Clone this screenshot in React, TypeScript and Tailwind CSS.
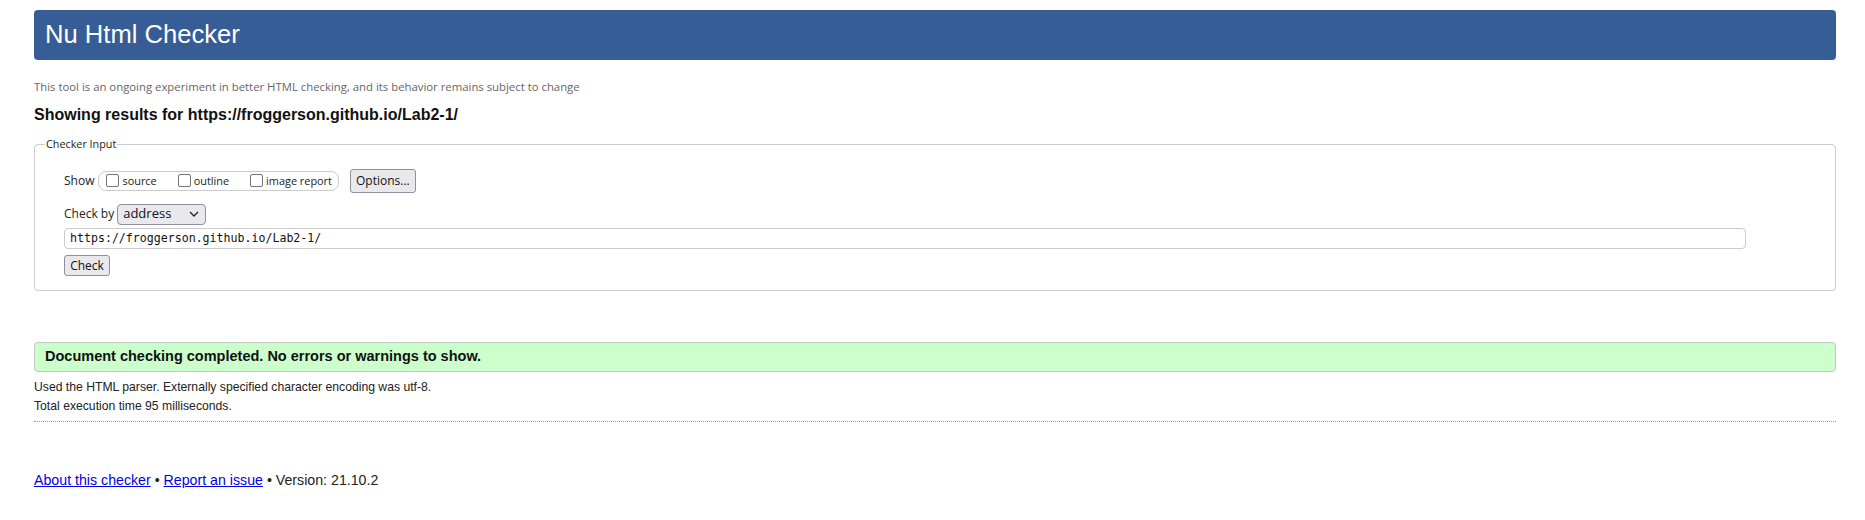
import React from "react";

function Box({ label }: { label: string }) {
  return (
    <span className="flex items-center">
      <span className="inline-block w-[13px] h-[13px] border border-[#767676] rounded-[2px] bg-white" />
      <span className="ml-[3px] text-[10.9px] text-[#222]">{label}</span>
    </span>
  );
}

export default function App() {
  return (
    <div className="bg-white min-h-[520px] pl-[34px] pr-[29px] pt-[10px] font-['Liberation_Sans',Arial,sans-serif] text-[#111]">
      <div className="h-[50px] rounded-[4px] bg-[#365d95] flex items-center pl-[11px]">
        <h1 className="text-white text-[25.6px] leading-none">Nu Html Checker</h1>
      </div>
      <p className="mt-[20px] h-[14px] leading-[14px] text-[11.35px] text-[#666666] font-['Open_Sans',sans-serif]">
        This tool is an ongoing experiment in better HTML checking, and its behavior remains subject to change
      </p>
      <h2 className="mt-[11px] h-[20px] leading-[20px] text-[16px] font-bold text-[#111]">
        Showing results for https://froggerson.github.io/Lab2-1/
      </h2>
      <fieldset className="mt-[11px] border border-[#cccccc] rounded-[4px] pl-[29px] pb-[14px] font-['Open_Sans',sans-serif] text-[#222]">
        <legend className="-ml-[19px] px-[1px] h-[16px] leading-[16px] text-[10.8px]">Checker Input</legend>
        <div className="pt-[17px] flex items-center h-[41px]">
          <div className="flex items-center h-[24px]">
            <span className="text-[12px]">Show</span>
            <div className="ml-[4px] h-[20px] flex items-center gap-[21px] border border-[#cccccc] rounded-[8px] pl-[7px] pr-[6px]">
              <Box label="source" />
              <Box label="outline" />
              <Box label="image report" />
            </div>
            <button className="ml-[11px] h-[24px] px-[5px] bg-[#e9e9ed] border border-[#8f8f9d] rounded-[3px] text-[12px] leading-none text-[#111]">
              Options...
            </button>
          </div>
        </div>
        <div className="mt-[10px] flex items-center h-[22px]">
          <span className="text-[12px]">Check by</span>
          <div className="ml-[3px] w-[89px] h-[21px] bg-[#e9e9ed] border border-[#8f8f9d] rounded-[4px] flex items-center justify-between pl-[5px] pr-[6px]">
            <span className="text-[13px] text-[#111]">address</span>
            <svg width="10" height="6" viewBox="0 0 10 6" fill="none">
              <path d="M1 1 L5 5 L9 1" stroke="#222" strokeWidth="1.3" />
            </svg>
          </div>
        </div>
        <div className="mt-[3px] w-[95%] h-[21px] border border-[#cccccc] rounded-[4px] flex items-center pl-[5px]">
          <span className="font-['DejaVu_Sans_Mono',monospace] text-[11.6px] text-[#111]">https://froggerson.github.io/Lab2-1/</span>
        </div>
        <button className="mt-[6px] block h-[21px] w-[46px] bg-[#e9e9ed] border border-[#8f8f9d] rounded-[3px] text-[12px] leading-none text-[#111]">
          Check
        </button>
      </fieldset>
      <div className="mt-[51px] h-[30px] bg-[#ccffcc] border border-[#bbccbb] rounded-[4px] flex items-center pl-[10px]">
        <span className="text-[14.5px] font-bold text-[#111]">Document checking completed. No errors or warnings to show.</span>
      </div>
      <p className="mt-[6px] text-[12.2px] leading-[19px] text-[#222]">
        Used the HTML parser. Externally specified character encoding was utf-8.
      </p>
      <p className="text-[12.2px] leading-[19px] text-[#222]">Total execution time 95 milliseconds.</p>
      <div className="mt-[5px] border-t border-dotted border-[#999]" />
      <p className="mt-[49px] text-[14.2px] leading-[18px] text-[#222]">
        <a className="text-[#0000ee] underline" href="#">About this checker</a>
        {" • "}
        <a className="text-[#0000ee] underline" href="#">Report an issue</a>
        {" • Version: 21.10.2"}
      </p>
    </div>
  );
}
